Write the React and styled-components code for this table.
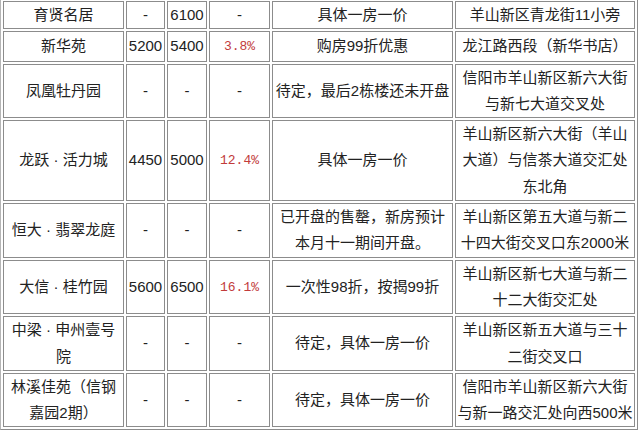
import React from "react";
import styled, { createGlobalStyle } from "styled-components";

const GlobalStyle = createGlobalStyle`
    html, body {
        margin: 0;
        padding: 0;
        background: #fff;
    }
    body {
        font-family: "Liberation Sans", "Noto Sans CJK SC", sans-serif;
        color: #222;
        overflow: hidden;
    }
`;

const Page = styled.div`
    width: 640px;
    height: 436px;
    overflow: hidden;
`;

const PriceTable = styled.table`
    width: 638px;
    margin-top: -2px;
    table-layout: fixed;
    border-collapse: separate;
    border-spacing: 2px;
    border: 1px solid #8c8c8c;
    border-top-color: #b5b5b5;
    border-left-color: #b5b5b5;
`;

const Cell = styled.td`
    box-sizing: border-box;
    height: ${({$lines}) => $lines * 26.3 + 2}px;
    padding: 0;
    border: 1px solid #8c8c8c;
    text-align: center;
    vertical-align: middle;
    font-size: 15px;
    line-height: 26.3px;
    white-space: nowrap;
    overflow: hidden;
`;

const Line = styled.span`
    display: block;
`;

const Percent = styled.span`
    font-family: "Liberation Mono", "DejaVu Sans Mono", monospace;
    font-size: 13px;
    color: #c23b3b;
`;

const widths = [121, 39, 40, 61, 181, 180];

const rows = [
    {name: ["育贤名居"], low: "-", high: "6100", rate: "-", offer: ["具体一房一价"], addr: ["羊山新区青龙街11小旁"]},
    {name: ["新华苑"], low: "5200", high: "5400", rate: "3.8%", offer: ["购房99折优惠"], addr: ["龙江路西段（新华书店）"]},
    {name: ["凤凰牡丹园"], low: "-", high: "-", rate: "-", offer: ["待定，最后2栋楼还未开盘"], addr: ["信阳市羊山新区新六大街", "与新七大道交叉处"]},
    {name: ["龙跃 · 活力城"], low: "4450", high: "5000", rate: "12.4%", offer: ["具体一房一价"], addr: ["羊山新区新六大街（羊山", "大道）与信茶大道交汇处", "东北角"]},
    {name: ["恒大 · 翡翠龙庭"], low: "-", high: "-", rate: "-", offer: ["已开盘的售罄，新房预计", "本月十一期间开盘。"], addr: ["羊山新区第五大道与新二", "十四大街交叉口东2000米"]},
    {name: ["大信 · 桂竹园"], low: "5600", high: "6500", rate: "16.1%", offer: ["一次性98折，按揭99折"], addr: ["羊山新区新七大道与新二", "十二大街交汇处"]},
    {name: ["中梁 · 申州壹号", "院"], low: "-", high: "-", rate: "-", offer: ["待定，具体一房一价"], addr: ["羊山新区新五大道与三十", "二街交叉口"]},
    {name: ["林溪佳苑（信钢", "嘉园2期）"], low: "-", high: "-", rate: "-", offer: ["待定，具体一房一价"], addr: ["信阳市羊山新区新六大街", "与新一路交汇处向西500米"]},
];

const Lines = ({items}) => items.map((text, i) => <Line key={i}>{text}</Line>);

export default function App() {
    return (
        <Page>
            <GlobalStyle/>
            <PriceTable>
                <colgroup>
                    {widths.map((w, i) => <col key={i} style={{width: w}}/>)}
                </colgroup>
                <tbody>
                {rows.map((row, i) => {
                    const lines = Math.max(row.name.length, row.offer.length, row.addr.length);
                    return (
                        <tr key={i}>
                            <Cell $lines={lines}><Lines items={row.name}/></Cell>
                            <Cell $lines={lines}>{row.low}</Cell>
                            <Cell $lines={lines}>{row.high}</Cell>
                            <Cell $lines={lines}>{row.rate === "-" ? "-" : <Percent>{row.rate}</Percent>}</Cell>
                            <Cell $lines={lines}><Lines items={row.offer}/></Cell>
                            <Cell $lines={lines}><Lines items={row.addr}/></Cell>
                        </tr>
                    );
                })}
                </tbody>
            </PriceTable>
        </Page>
    );
}
